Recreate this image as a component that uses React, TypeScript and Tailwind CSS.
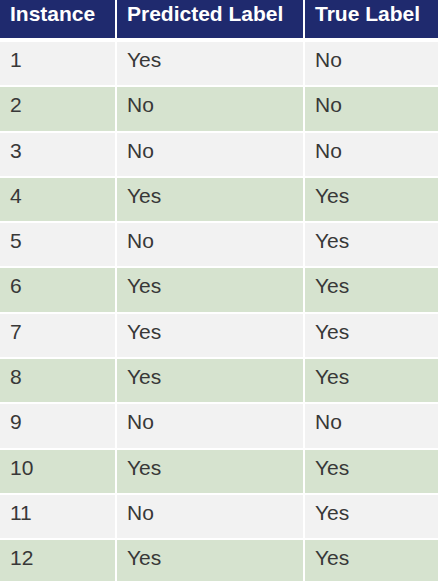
const rows: [string, string, string][] = [
  ["1", "Yes", "No"],
  ["2", "No", "No"],
  ["3", "No", "No"],
  ["4", "Yes", "Yes"],
  ["5", "No", "Yes"],
  ["6", "Yes", "Yes"],
  ["7", "Yes", "Yes"],
  ["8", "Yes", "Yes"],
  ["9", "No", "No"],
  ["10", "Yes", "Yes"],
  ["11", "No", "Yes"],
  ["12", "Yes", "Yes"],
];

const cols = "grid grid-cols-[115px_186px_1fr] gap-x-[2px]";

export default function App() {
  return (
    <div className="w-[438px] h-[581px] overflow-hidden bg-white font-['Liberation_Sans',Arial,sans-serif] text-[21px] leading-[24px]">
      <div className={cols}>
        {["Instance", "Predicted Label", "True Label"].map((h) => (
          <div key={h} className="h-[38px] bg-[#1f2a6e] px-[10px] pt-[2px] font-bold text-white whitespace-nowrap">
            {h}
          </div>
        ))}
      </div>
      <div className="mt-[4px] flex flex-col gap-y-[2px]">
        {rows.map((r, i) => (
          <div key={r[0]} className={cols}>
            {r.map((c, j) => (
              <div
                key={j}
                className={`h-[43.3px] px-[10px] pt-[6px] text-[#383838] ${i % 2 === 0 ? "bg-[#f2f2f2]" : "bg-[#d6e3cf]"}`}
              >
                {c}
              </div>
            ))}
          </div>
        ))}
      </div>
    </div>
  );
}
